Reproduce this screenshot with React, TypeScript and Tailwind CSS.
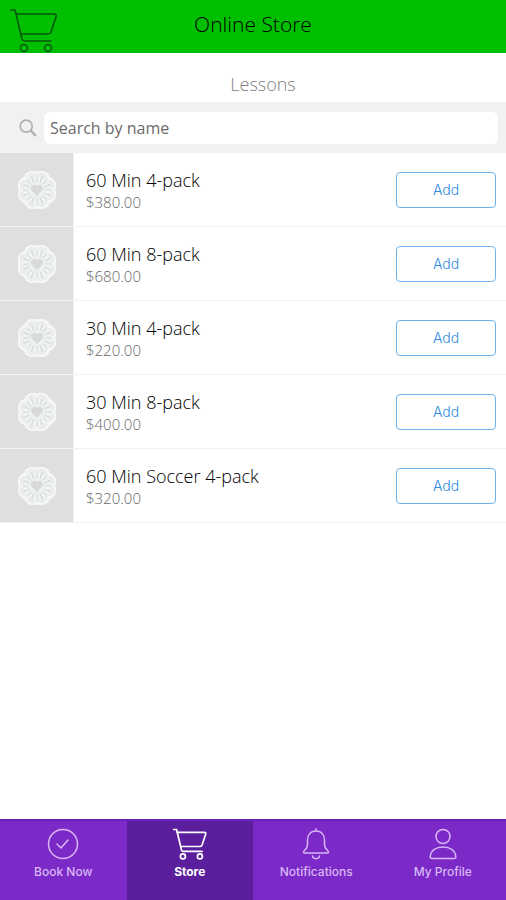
import type { ReactNode } from "react";
import { clsx } from "clsx";

interface Product {
  id: number;
  name: string;
  price: string;
}

const products: Product[] = [
  { id: 1, name: "60 Min 4-pack", price: "$380.00" },
  { id: 2, name: "60 Min 8-pack", price: "$680.00" },
  { id: 3, name: "30 Min 4-pack", price: "$220.00" },
  { id: 4, name: "30 Min 8-pack", price: "$400.00" },
  { id: 5, name: "60 Min Soccer 4-pack", price: "$320.00" },
];

function CartIcon({ className, strokeWidth }: { className: string; strokeWidth: number }) {
  return (
    <svg
      viewBox="0 0 48 45"
      fill="none"
      stroke="currentColor"
      strokeWidth={strokeWidth}
      strokeLinecap="round"
      strokeLinejoin="round"
      className={className}
      aria-hidden="true"
    >
      <path d="M1 2h4l1 4 6 25q1 2 3 2h26" />
      <path d="M6 6h38q3 0 2 3l-5 15q-1 2-3 2H11" />
      <circle cx="14" cy="40" r="3.5" />
      <circle cx="38" cy="40" r="3.5" />
    </svg>
  );
}

const petals = [22.5, 67.5, 112.5, 157.5, 202.5, 247.5, 292.5, 337.5];

function FlowerIcon() {
  return (
    <svg viewBox="0 0 38 38" className="h-[38px] w-[38px]" fill="none" aria-hidden="true">
      <circle cx="19" cy="19" r="17" fill="#eceeee" />
      {petals.map((angle) => (
        <g key={angle} transform={`rotate(${angle} 19 19)`}>
          <path d="M12.4 3.6a8 8 0 0 1 13.2 0" stroke="#f5f7f7" strokeWidth="2.4" strokeLinecap="round" />
          <path d="M19 4.5v6" stroke="#d9dcdc" strokeWidth="1.3" strokeLinecap="round" />
          <path d="M16.2 5.8l1 4M21.8 5.8l-1 4" stroke="#f7f9f9" strokeWidth="1" />
          <path d="M13.6 7l2 4.200" stroke="#dcdfdf" strokeWidth="1.1" strokeLinecap="round" />
        </g>
      ))}
      <circle cx="19" cy="19" r="7.8" fill="#eff1f1" />
      <path d="M19 25l-5.4-5.6a3.5 3.5 0 0 1 5.4-4.400 3.5 3.5 0 0 1 5.400 4.400z" fill="#d8dada" />
    </svg>
  );
}

function ProductRow({ product }: { product: Product }) {
  return (
    <li className="flex h-[74px] border-b border-[#f2f2f2]">
      <div className="flex w-[74px] shrink-0 items-center justify-center border-r border-[#f0f0f0] bg-[#dfdfdf]">
        <FlowerIcon />
      </div>
      <div className="flex min-w-0 flex-1 flex-col justify-center pl-3">
        <div className="text-lg leading-6 font-light text-black">{product.name}</div>
        <div className="text-[15px] leading-5 font-light text-[#666666]">{product.price}</div>
      </div>
      <button
        type="button"
        aria-label={`Add ${product.name}`}
        className="mr-[10px] h-9 w-[100px] shrink-0 self-center rounded border border-[#6fb1ec] font-['Inter','Open_Sans',sans-serif] text-sm font-light text-[#2f8be0]"
      >
        Add
      </button>
    </li>
  );
}

function NavItem({ label, active, children }: { label: string; active?: boolean; children: ReactNode }) {
  return (
    <a
      href="#"
      aria-current={active ? "page" : undefined}
      className={clsx(
        "flex flex-1 flex-col items-center gap-1 pt-[7px]",
        active ? "bg-[#5b1f9e] font-bold text-white" : "bg-[#7b2ac8] font-medium text-[#d9b8f5]"
      )}
    >
      {children}
      <span className="text-xs leading-4">{label}</span>
    </a>
  );
}

export default function App() {
  return (
    <div className="flex min-h-screen flex-col bg-white font-['Open_Sans','Noto_Sans',sans-serif]">
      <header className="relative flex h-[53px] items-center justify-center bg-[#00bf00]">
        <button type="button" aria-label="Cart" className="absolute top-2 left-[10px] text-[#04560a]">
          <CartIcon className="h-[45px] w-12" strokeWidth={1.5} />
        </button>
        <h1 className="pb-1 text-[21px] font-light text-black">Online Store</h1>
      </header>

      <h2 className="flex h-[49px] items-center justify-center pt-3 pl-5 text-lg font-light text-[#808080]">Lessons</h2>

      <div className="flex h-[51px] items-center bg-[#f1f1f1] pr-2 pl-[19px]">
        <label htmlFor="search" aria-label="Search" className="w-[25px] shrink-0 text-[#b0b0b0]">
          <svg viewBox="0 0 18 18" className="h-[18px] w-[18px]" fill="none" stroke="currentColor" aria-hidden="true">
            <circle cx="7.2" cy="7.2" r="6" strokeWidth="1.7" />
            <path d="M11.7 11.7l5.2 5.1" strokeWidth="2.4" />
          </svg>
        </label>
        <input
          id="search"
          type="text"
          placeholder="Search by name"
          className="h-8 min-w-0 flex-1 rounded-md bg-white px-[6px] text-base text-[#555555] outline-none placeholder:text-[#6b6b6b]"
        />
      </div>

      <main className="flex-1">
        <ul>
          {products.map((product) => (
            <ProductRow key={product.id} product={product} />
          ))}
        </ul>
      </main>

      <nav className="flex h-[81px] border-t-2 border-[#6a20b4] font-['Inter','Open_Sans',sans-serif]">
        <NavItem label="Book Now">
          <svg viewBox="0 0 32 32" className="h-8 w-8" fill="none" stroke="currentColor" strokeWidth="1.5" aria-hidden="true">
            <circle cx="16" cy="16" r="14.5" />
            <path d="M10 16l4 4 7-8" strokeLinecap="round" strokeLinejoin="round" />
          </svg>
        </NavItem>
        <NavItem label="Store" active>
          <CartIcon className="h-8 w-[34px]" strokeWidth={2.4} />
        </NavItem>
        <NavItem label="Notifications">
          <svg
            viewBox="0 0 32 32"
            className="h-8 w-8"
            fill="none"
            stroke="currentColor"
            strokeWidth="1.5"
            strokeLinecap="round"
            strokeLinejoin="round"
            aria-hidden="true"
          >
            <path d="M16 1v2M16 3c-5.5 0-8.5 4-8.5 9v5c0 3-1.5 4-3.5 6-1 1-.5 2 .5 2h23c1 0 1.5-1 .5-2-2-2-3.5-3-3.5-6v-5c0-5-3-9-8.5-9z" />
            <path d="M12.5 28c.5 3.5 6.5 3.5 7 0" />
          </svg>
        </NavItem>
        <NavItem label="My Profile">
          <svg viewBox="0 0 32 32" className="h-8 w-8" fill="none" stroke="currentColor" strokeWidth="1.5" strokeLinejoin="round" aria-hidden="true">
            <circle cx="16" cy="8.5" r="7" />
            <path d="M5 30.5c-1.5 0-2-1-1.8-2.2C4 22.5 9 19 16 19s12 3.5 12.8 9.3c.2 1.2-.3 2.2-1.8 2.2z" />
          </svg>
        </NavItem>
      </nav>
    </div>
  );
}
